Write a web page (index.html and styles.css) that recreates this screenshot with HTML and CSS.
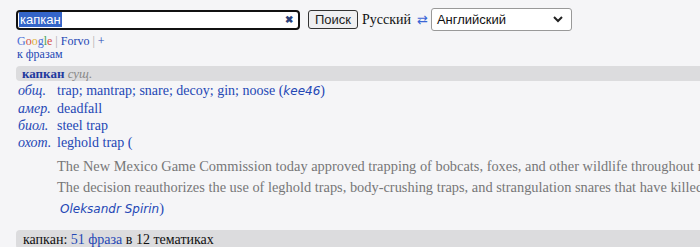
FILE: index.html
```html
<!DOCTYPE html>
<html lang="ru">
<head>
    <meta charset="UTF-8">
    <title>капкан — Русский / Английский</title>
    <link rel="stylesheet" href="styles.css">
</head>
<body>
    <div class="search-bar">
        <div class="search-box">
            <span class="query">капкан</span>
            <span class="clear">&#10006;</span>
        </div>
        <button class="search-btn">Поиск</button>
        <span class="lang-from">Русский</span>
        <span class="swap">&#8644;</span>
        <div class="lang-to">
            <span>Английский</span>
            <svg width="10" height="7" viewBox="0 0 10 7"><path d="M1 1 L5 5 L9 1" fill="none" stroke="#222" stroke-width="2"/></svg>
        </div>
    </div>

    <div class="links">
        <a href="#" class="google"><span class="g1">G</span><span class="g2">o</span><span class="g3">o</span><span class="g1">g</span><span class="g4">l</span><span class="g2">e</span></a>
        <span class="sep">|</span>
        <a href="#">Forvo</a>
        <span class="sep">|</span>
        <a href="#">+</a>
    </div>
    <div class="links"><a href="#">к фразам</a></div>

    <div class="term-head"><a href="#">капкан</a> <span class="pos">сущ.</span></div>

    <div class="entries">
        <div class="entry">
            <span class="subject">общ.</span>
            <span class="trans"><a href="#">trap</a>; <a href="#">mantrap</a>; <a href="#">snare</a>; <a href="#">decoy</a>; <a href="#">gin</a>; <a href="#">noose</a> (<span class="user">kee46</span>)</span>
        </div>
        <div class="entry">
            <span class="subject">амер.</span>
            <span class="trans"><a href="#">deadfall</a></span>
        </div>
        <div class="entry">
            <span class="subject">биол.</span>
            <span class="trans"><a href="#">steel trap</a></span>
        </div>
        <div class="entry">
            <span class="subject">охот.</span>
            <span class="trans"><a href="#">leghold trap</a> (</span>
        </div>
        <div class="examples">
            <p>The New Mexico Game Commission today approved trapping of bobcats, foxes, and other wildlife throughout nearly all of the state.</p>
            <p>The decision reauthorizes the use of leghold traps, body-crushing traps, and strangulation snares that have killed and injured many animals.</p>
            <p class="author"><span class="user">Oleksandr Spirin</span>)</p>
        </div>
    </div>

    <div class="phrases">капкан: <a href="#">51 фраза</a> в 12 тематиках</div>
</body>
</html>
```

FILE: styles.css
```css
body {
    margin: 0;
    padding: 8px 0 0 16px;
    background: #f5f5f7;
    font-family: "Liberation Serif", "Times New Roman", serif;
    color: #222;
    white-space: nowrap;
    overflow: hidden;
}

a {
    color: #2447b5;
    text-decoration: none;
}

.search-bar {
    display: flex;
    align-items: center;
    height: 23px;
}

.search-box {
    width: 274px;
    height: 16px;
    border: 2px solid #111;
    border-radius: 4px;
    background: #fff;
    display: flex;
    align-items: center;
    justify-content: space-between;
    padding: 0 5px 0 1px;
    font-family: "Liberation Sans", Arial, sans-serif;
    font-size: 13px;
}

.query {
    background: #3465c8;
    color: #fff;
    line-height: 15px;
    padding: 0 1px;
}

.clear {
    color: #2a3f7a;
    font-size: 10px;
    font-weight: bold;
}

.search-btn {
    margin-left: 8px;
    height: 19px;
    width: 50px;
    padding: 0;
    border: 1px solid #333;
    border-radius: 3px;
    background: #efeff1;
    font-family: "Liberation Sans", Arial, sans-serif;
    font-size: 13px;
    color: #222;
}

.lang-from {
    margin-left: 4px;
    font-size: 14px;
    color: #111;
}

.swap {
    margin-left: 6px;
    color: #3a66d6;
    font-size: 13px;
    font-family: "DejaVu Sans", sans-serif;
}

.lang-to {
    margin-left: 3px;
    width: 126px;
    height: 21px;
    border: 1px solid #999;
    border-radius: 3px;
    background: #fff;
    display: flex;
    align-items: center;
    justify-content: space-between;
    padding: 0 8px 0 5px;
    font-family: "Liberation Sans", Arial, sans-serif;
    font-size: 13px;
    color: #111;
}

.links {
    font-size: 12px;
    line-height: 13px;
    margin-top: 4px;
    padding-left: 1px;
}

.links + .links {
    margin-top: 0;
}

.sep {
    color: #aaa;
}

.google .g1 { color: #4a6fd6; }
.google .g2 { color: #d65148; }
.google .g3 { color: #e0b23a; }
.google .g4 { color: #4aa55a; }

.term-head {
    margin-top: 5px;
    padding-left: 6px;
    height: 15px;
    line-height: 15px;
    background: #dcdcde;
    border-radius: 4px 0 0 4px;
    font-size: 13px;
}

.term-head a {
    color: #1f3a9e;
    font-weight: bold;
}

.pos {
    color: #888;
    font-style: italic;
}

.entries {
    margin-top: 1px;
    font-size: 14px;
}

.entry {
    display: flex;
    line-height: 17px;
    padding-left: 2px;
}

.subject {
    width: 39px;
    font-style: italic;
    color: #2447b5;
    flex-shrink: 0;
}

.trans {
    color: #2447b5;
}

.user {
    font-family: "DejaVu Sans", Verdana, sans-serif;
    font-style: italic;
    font-size: 12px;
}

.examples {
    padding-left: 41px;
    margin-top: 5px;
    font-size: 14.4px;
}

.examples p {
    margin: 0;
    line-height: 21px;
    color: #777;
}

.examples .author {
    padding-left: 3px;
    color: #2447b5;
}

.phrases {
    margin-top: 10px;
    padding-left: 7px;
    height: 19px;
    line-height: 19px;
    background: #dcdcde;
    border-radius: 4px 0 0 4px;
    font-size: 14px;
    color: #111;
}
```
